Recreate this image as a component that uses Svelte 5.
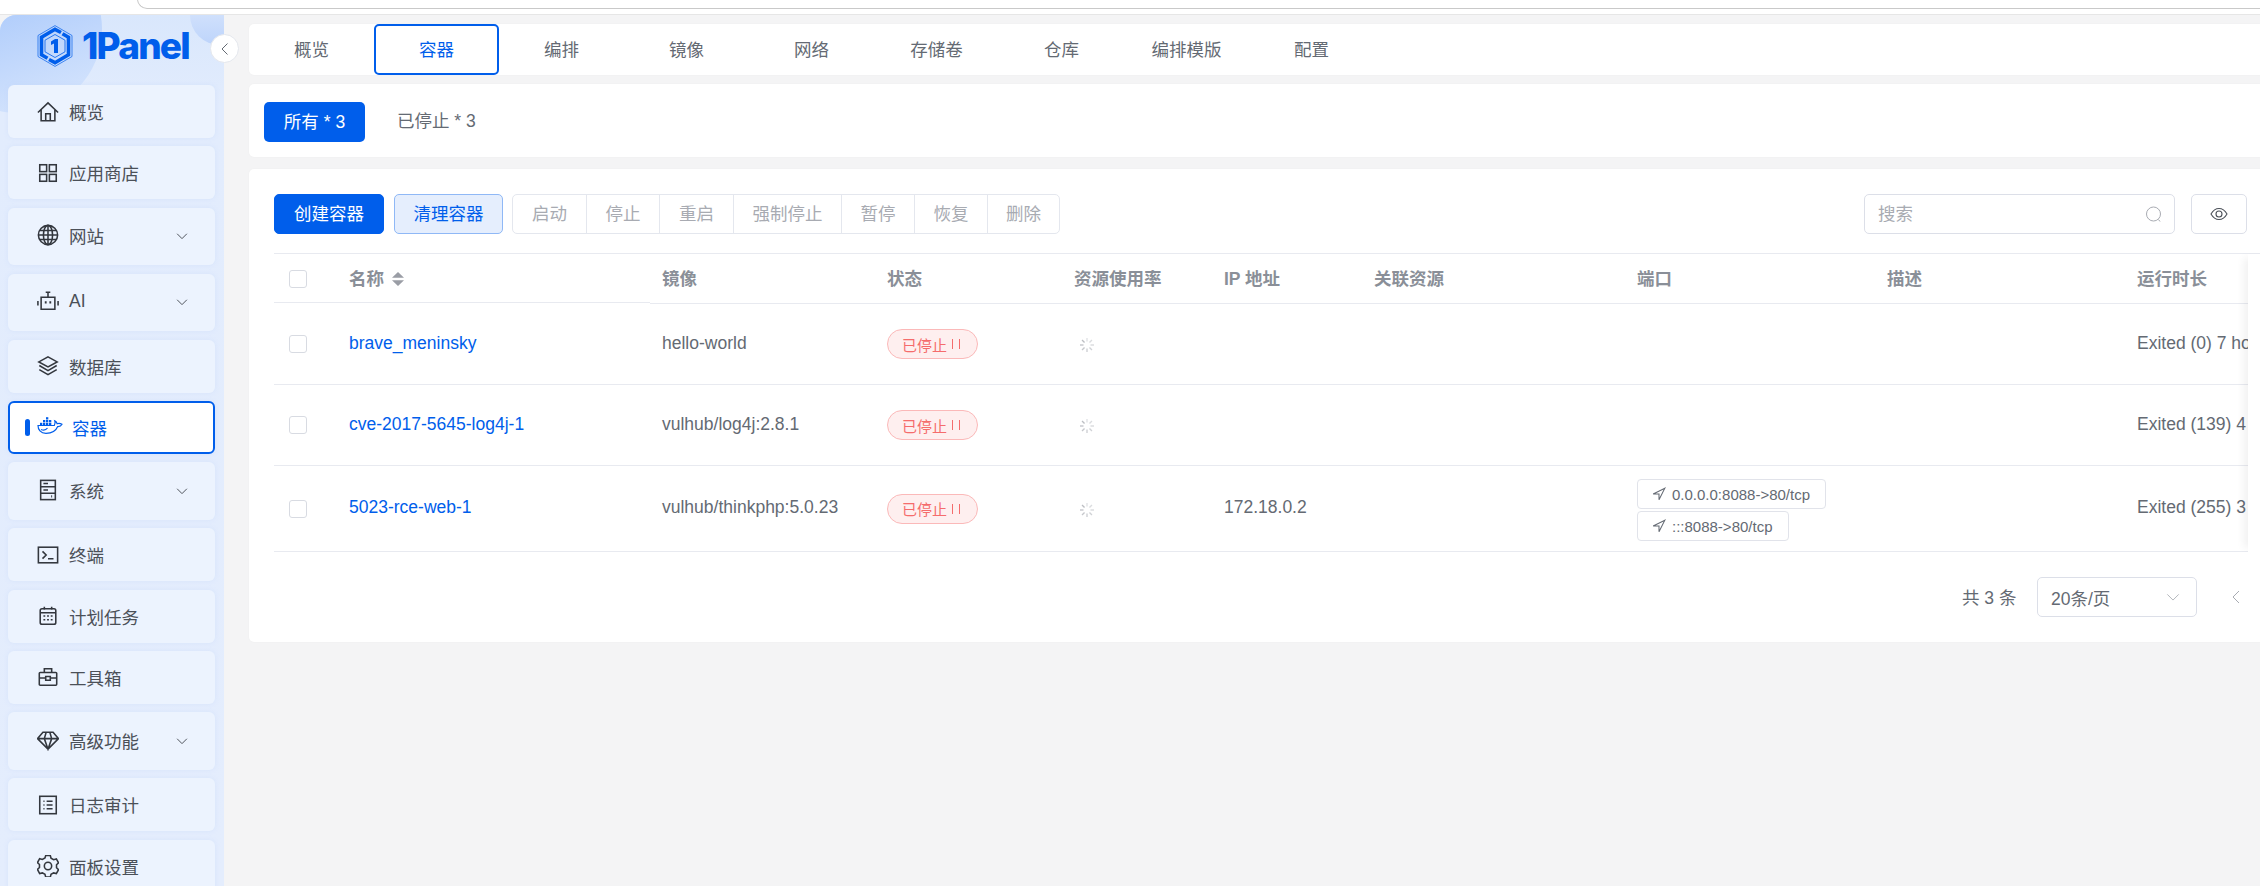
<script>
  const menu = [
    { t: '概览', i: 'home' },
    { t: '应用商店', i: 'apps' },
    { t: '网站', i: 'globe', sub: true },
    { t: 'AI', i: 'robot', sub: true },
    { t: '数据库', i: 'layers' },
    { t: '容器', i: 'docker', active: true },
    { t: '系统', i: 'server', sub: true },
    { t: '终端', i: 'term' },
    { t: '计划任务', i: 'cal' },
    { t: '工具箱', i: 'box' },
    { t: '高级功能', i: 'gem', sub: true },
    { t: '日志审计', i: 'log' },
    { t: '面板设置', i: 'gear' }
  ];
  const tabs = ['概览', '容器', '编排', '镜像', '网络', '存储卷', '仓库', '编排模版', '配置'];
  const ops = [
    { t: '启动', w: 73 },
    { t: '停止', w: 73 },
    { t: '重启', w: 74 },
    { t: '强制停止', w: 108 },
    { t: '暂停', w: 73 },
    { t: '恢复', w: 73 },
    { t: '删除', w: 72 }
  ];
  const heads = ['镜像', '状态', '资源使用率', 'IP 地址', '关联资源', '端口', '描述', '运行时长'];
  const rows = [
    { n: 'brave_meninsky', img: 'hello-world', ip: '', ports: [], up: 'Exited (0) 7 hours ago' },
    { n: 'cve-2017-5645-log4j-1', img: 'vulhub/log4j:2.8.1', ip: '', ports: [], up: 'Exited (139) 4 hours ago' },
    { n: '5023-rce-web-1', img: 'vulhub/thinkphp:5.0.23', ip: '172.18.0.2', ports: ['0.0.0.0:8088->80/tcp', ':::8088->80/tcp'], up: 'Exited (255) 3 hours ago' }
  ];
  const spokes = [0, 45, 90, 135, 180, 225, 270, 315];
</script>

{#snippet chevron(cls)}
  <svg class={cls} viewBox="0 0 16 16"><path d="M1.500 5 8 11.500 14.500 5" /></svg>
{/snippet}

{#snippet icon(n)}
  <svg class="mi" viewBox="0 0 24 24">
    {#if n === 'home'}
      <path d="M1 12.500 12 2l11 10.500M4.500 9.500v12h15v-12M9.500 21.500V14h5v7.500" />
    {:else if n === 'apps'}
      <rect x="3" y="3" width="7.500" height="7.500" /><rect x="13.500" y="3" width="7.500" height="7.500" /><rect x="3" y="13.500" width="7.500" height="7.500" /><rect x="13.500" y="13.500" width="7.500" height="7.500" />
    {:else if n === 'globe'}
      <circle cx="12" cy="12" r="10.500" /><ellipse cx="12" cy="12" rx="5" ry="10.500" /><path d="M12 1.500v21M1.500 12h21M3 7h18M3 17h18" />
    {:else if n === 'robot'}
      <path d="M4.500 8h15v13h-15zM12 8V3M9.500 2.500h5M1 12v5M23 12v5" /><path class="thick" d="M8.500 13.500h2M13.500 13.500h2" />
    {:else if n === 'layers'}
      <path d="M12 2 22 7.500 12 13 2 7.500zM2.500 11.500 12 17l9.500-5.500M2.500 16 12 21.500 21.500 16" />
    {:else if n === 'server'}
      <rect x="4" y="1.500" width="16" height="21" /><path d="M4 8.500h16M4 15.500h16M7 5h5M7 12h5" /><path class="thick" d="M15.500 19h1" />
    {:else if n === 'term'}
      <rect x="1.500" y="3.500" width="21" height="17" /><path d="m6 8 4 4-4 4M12 16h6" />
    {:else if n === 'cal'}
      <rect x="3.500" y="4" width="17" height="17" rx="2" /><path d="M3.500 8.500h17M8 2v3M16 2v3M7 12h2M11 12h2M15 12h2M7 16h2M11 16h2M15 16h2" />
    {:else if n === 'box'}
      <rect x="2.500" y="7" width="19" height="14" rx="1" /><path d="M8 7V3h8v4M2.500 13h7M14.500 13h7M9.500 11.500h5v4h-5z" />
    {:else if n === 'gem'}
      <path d="M6.500 3.500h11l6 7L12 22 .5 10.500zM.5 10.500h23M8 10.500 12 22l4-11.500M8 10.500l2-7M16 10.500l-2-7" />
    {:else if n === 'log'}
      <rect x="3" y="2.500" width="18" height="19" /><path d="M10.500 8H17M10.500 12H17M10.500 16H17M7 8h1.200M7 12h1.200M7 16h1.200" />
    {:else if n === 'gear'}
      <path d="m9.500 1.800 5 0 .8 3 2.800 1.600 3-.8 2.400 4.300-2.200 2.100 0 3.200 2.200 2.100-2.400 4.300-3-.8-2.800 1.600-.8 3h-5l-.8-3-2.800-1.600-3 .8L.5 17l2.200-2.100v-3.200L.5 9.600l2.400-4.300 3 .8 2.800-1.600z" transform="translate(0 -1.300)" /><circle cx="12" cy="12" r="4" />
    {/if}
  </svg>
{/snippet}

{#snippet docker()}
  <svg class="dk" viewBox="0 0 26 17">
    <path d="M1 8.500h16.300c.9-1.700 1-3.200.5-4.600 1.100.5 2 1.500 2.400 2.800 1.500-.6 3.200-.4 4.800.6-1 1.900-2.700 2.400-4.300 2.300C19 13.800 14.500 16.300 9 16.300 3.500 16.300 1 12.500 1 8.500Z" />
    <path d="M4 12.500c2.500 1 5 .5 6.500-1.500" />
    <g class="fill">
      <rect x="3" y="5.800" width="2.300" height="2.300" /><rect x="6" y="5.800" width="2.300" height="2.300" /><rect x="9" y="5.800" width="2.300" height="2.300" /><rect x="12" y="5.800" width="2.300" height="2.300" /><rect x="6" y="3" width="2.300" height="2.300" /><rect x="9" y="3" width="2.300" height="2.300" /><rect x="12" y="3" width="2.300" height="2.300" /><rect x="9" y=".2" width="2.300" height="2.300" />
    </g>
  </svg>
{/snippet}

<div class="chrome"><div class="url"></div></div>
<div class="page">
  <aside class="side">
    <div class="blob big"></div>
    <div class="blob small"></div>
    <div class="logo">
      <svg class="hex" viewBox="0 0 36 42">
        <path class="h1" d="M18 .6 35 10.500v21L18 41.400 1 31.500v-21z" />
        <path class="h2" d="M24 7.500 18 4.300 4.500 12.300v17.400l6 3.500M12 34.500l6 3.200 13.500-8V12.300l-6-3.500" />
        <path class="h4" d="M18 9.500 28 15.200v11.600L18 32.500 8 26.800V15.200z" />
        <path class="h3" d="M14 16.500 18 14h3v14h-4V18.500l-3 1.500z" />
      </svg>
      <span class="brand">1Panel</span>
    </div>
    <button class="collapse" aria-label="收起">
      <svg viewBox="0 0 12 12"><path d="M8.500 .5 3 6l5.500 5.500" /></svg>
    </button>
    <nav class="menu">
      {#each menu as m}
        <div class="item" class:tall={m.sub} class:on={m.active}>
          {#if m.active}
            <i class="bar"></i>
            {@render docker()}
          {:else}
            {@render icon(m.i)}
          {/if}
          <span>{m.t}</span>
          {#if m.sub}{@render chevron('chev')}{/if}
        </div>
      {/each}
    </nav>
  </aside>

  <main class="main">
    <div class="card tabs">
      {#each tabs as t, i}
        <div class="tab" class:cur={i === 1}>{t}</div>
      {/each}
    </div>

    <div class="card filter">
      <div class="all">所有 * 3</div>
      <div class="stop">已停止 * 3</div>
    </div>

    <section class="card box">
      <div class="tools">
        <button class="btn pri">创建容器</button>
        <button class="btn soft">清理容器</button>
        <div class="group">
          {#each ops as o}
            <div class="op" style="width:{o.w}px">{o.t}</div>
          {/each}
        </div>
        <div class="search">
          <span>搜索</span>
          <svg viewBox="0 0 16 16"><circle cx="7.500" cy="7.500" r="7" /><path d="m12.500 13 1.500 2" /></svg>
        </div>
        <div class="eye">
          <svg viewBox="0 0 18 14"><path d="M1 7c2-3.500 5-5.500 8-5.500S15 3.500 17 7c-2 3.500-5 5.500-8 5.500S3 10.500 1 7Z" /><circle cx="9" cy="7" r="3" /></svg>
        </div>
      </div>

      <div class="wrap">
        <table>
          <colgroup>
            <col style="width:63px" /><col style="width:313px" /><col style="width:225px" /><col style="width:187px" /><col style="width:150px" /><col style="width:150px" /><col style="width:263px" /><col style="width:250px" /><col style="width:250px" /><col style="width:300px" />
          </colgroup>
          <thead>
            <tr>
              <th class="lead"><i class="ck head"></i></th>
              <th class="lead">名称 <svg class="sort" viewBox="0 0 12 14"><path d="M6 0 12 5.800H0zM6 14 0 8.200h12z" /></svg></th>
              {#each heads as h}<th>{h}</th>{/each}
            </tr>
          </thead>
          <tbody>
            {#each rows as r}
              <tr>
                <td><i class="ck"></i></td>
                <td class="link t">{r.n}</td>
                <td class="t">{r.img}</td>
                <td><span class="tag">已停止 <svg viewBox="0 0 10 12"><path d="M1.500 1v10M8.500 1v10" /></svg></span></td>
                <td>
                  <svg class="spin" viewBox="0 0 18 18">
                    {#each spokes as a, k}
                      <line x1="9" y1="2" x2="9" y2="5.500" transform="rotate({a} 9 9)" style="opacity:{0.35 + k * 0.06}" />
                    {/each}
                  </svg>
                </td>
                <td class="t">{r.ip}</td>
                <td></td>
                <td class="ports">
                  {#each r.ports as p}
                    <div class="port">
                      <svg viewBox="0 0 12 12"><path d="M11 1 1 6h5v5z" /></svg>
                      {p}
                    </div>
                  {/each}
                </td>
                <td></td>
                <td class="t">{r.up}</td>
              </tr>
            {/each}
          </tbody>
        </table>
        <div class="fixed"></div>
      </div>

      <div class="pager">
        <span class="total">共 3 条</span>
        <div class="size">20条/页 {@render chevron('schev')}</div>
        <svg class="prev" viewBox="0 0 10 14"><path d="M8 1 2 7l6 6" /></svg>
      </div>
    </section>
  </main>
</div>

<style>
  :global(html), :global(body) {
    margin: 0;
    height: 886px;
    overflow: hidden;
    background: #f4f4f5;
  }
  * { box-sizing: border-box; }
  i { display: block; }
  button { font: inherit; }

  .chrome {
    height: 15px;
    background: #fff;
    border-bottom: 1px solid #e6e6e6;
    padding-left: 137px;
    overflow: hidden;
  }
  .url {
    height: 10px;
    margin-top: -1px;
    border: 1px solid #c9c9c9;
    border-top: none;
    border-right: none;
    border-radius: 0 0 0 12px;
  }
  .page {
    display: flex;
    height: 871px;
    font-family: "Liberation Sans", "Noto Sans CJK SC", sans-serif;
    font-size: 17.5px;
    color: #646a73;
  }

  .side {
    position: relative;
    flex: 0 0 224px;
    background: linear-gradient(180deg, #d9e7fc 0, #e2ecfd 90px, #e4edfd 100%);
    border-radius: 16px 0 0 0;
    overflow: hidden;
    padding-left: 8px;
  }
  .blob { position: absolute; border-radius: 50%; }
  .big {
    left: -66px; top: -70px; width: 168px; height: 168px;
    background: linear-gradient(160deg, #aac9fb 30%, #dbe8fd 100%);
  }
  .small {
    left: 190px; top: -30px; width: 60px; height: 60px;
    background: linear-gradient(180deg, #e2ecfd, #bdd4fb);
  }
  .logo {
    position: relative;
    height: 70px;
    display: flex;
    align-items: center;
    padding: 0 0 0 29px;
    gap: 9px;
  }
  .hex { width: 36px; height: 42px; margin-top: -9px; }
  .h1 { fill: none; stroke: #005eeb; stroke-width: .7; }
  .h2 { fill: none; stroke: #005eeb; stroke-width: 3.600; }
  .h3 { fill: #005eeb; }
  .h4 { fill: none; stroke: #005eeb; stroke-width: .8; }
  .brand {
    font-family: Inter, "Liberation Sans", sans-serif;
    font-weight: 800;
    font-size: 37px;
    letter-spacing: -1.800px;
    color: #005eeb;
    margin-top: -9px;
  }
  .collapse {
    position: fixed;
    z-index: 3;
    left: 210px;
    top: 34px;
    width: 29px;
    height: 29px;
    border-radius: 50%;
    background: #fff;
    border: 1px solid #e3e6ec;
    padding: 0;
    display: grid;
    place-items: center;
  }
  .collapse svg { width: 12px; height: 12px; }
  .collapse path { fill: none; stroke: #646a73; stroke-width: 1; }

  .menu { position: relative; display: flex; flex-direction: column; gap: 8.330px; width: 207px; }
  .item {
    height: 53px;
    flex: none;
    display: flex;
    align-items: center;
    padding-left: 29px;
    background: #ecf3fe;
    border-radius: 6px;
    box-shadow: 0 0 4px rgba(190, 210, 245, .35);
    color: #4b5058;
    position: relative;
  }
  .item.tall { height: 57.670px; padding-bottom: 2px; }
  .item span { margin-left: 10px; }
  .item.on {
    background: #fff;
    border: 2px solid #005eeb;
    color: #005eeb;
    padding-left: 27px;
  }
  .item.on span { margin-left: 9px; }
  .bar {
    position: absolute;
    left: 15px;
    top: 16px;
    width: 5px;
    height: 17px;
    border-radius: 3px;
    background: #005eeb;
  }
  .mi { width: 22px; height: 22px; flex: none; }
  .mi :global(*) { fill: none; stroke: #33373e; stroke-width: 1.700; }
  .mi :global(.thick) { stroke-width: 2.500; }
  .dk { width: 26px; height: 17px; flex: none; margin-top: -3px; }
  .dk path { fill: none; stroke: #005eeb; stroke-width: 1.200; }
  .dk .fill rect { fill: #005eeb; }
  .chev {
    position: absolute;
    left: 168px;
    top: 50%;
    width: 12px;
    height: 12px;
    margin-top: -6px;
  }
  .chev path, .schev path { fill: none; stroke: #4b5058; stroke-width: 1.300; }

  .main { flex: 1; min-width: 0; padding: 9px 0 0 25px; }
  .card { background: #fff; border-radius: 5px 0 0 5px; margin-right: -20px; box-shadow: 0 0 2px rgba(0, 0, 0, .04); }

  .tabs { height: 51px; display: flex; }
  .tab {
    width: 125px;
    display: grid;
    place-items: center;
    flex: none;
    padding-bottom: 2px;
  }
  .tab.cur {
    border: 2px solid #005eeb;
    border-radius: 5px;
    color: #005eeb;
  }
  .filter {
    margin-top: 9px;
    height: 73px;
    padding: 18px 0 0 15px;
    display: flex;
    align-items: flex-start;
  }
  .all {
    width: 101px;
    height: 40px;
    padding-bottom: 3px;
    background: #005eeb;
    color: #fff;
    border-radius: 5px;
    display: grid;
    place-items: center;
  }
  .stop { height: 40px; line-height: 38px; margin-left: 32px; }

  .box { margin-top: 12px; height: 473px; padding: 25px 0 0 25px; }
  .tools { display: flex; height: 40px; width: 1973px; position: relative; }
  .btn {
    height: 40px;
    border-radius: 5px;
    border: 1px solid #005eeb;
    padding: 0 0 3px;
  }
  .pri { width: 110px; background: #005eeb; color: #fff; }
  .soft { width: 109px; margin-left: 10px; background: #e5eefd; border-color: #8fb8f6; color: #005eeb; }
  .group {
    display: flex;
    margin-left: 9px;
    height: 40px;
    border: 1px solid #e4e7ee;
    border-radius: 5px;
    color: #a8abb2;
  }
  .op { display: grid; place-items: center; padding-bottom: 3px; border-left: 1px solid #e4e7ee; flex: none; }
  .op:first-child { border-left: none; }
  .search {
    margin-left: auto;
    width: 311px;
    height: 40px;
    border: 1px solid #dcdfe8;
    border-radius: 5px;
    display: flex;
    align-items: center;
    justify-content: space-between;
    padding: 0 12px 0 13px;
    color: #a8abb2;
  }
  .search span { margin-top: -3px; }
  .search svg { width: 16px; height: 17px; }
  .search svg * { fill: none; stroke: #a8abb2; stroke-width: 1; }
  .eye {
    margin-left: 16px;
    width: 56px;
    height: 40px;
    border: 1px solid #dcdfe8;
    border-radius: 5px;
    display: grid;
    place-items: center;
  }
  .eye svg { width: 18px; height: 14px; }
  .eye svg * { fill: none; stroke: #4b5058; stroke-width: 1.100; }

  .wrap { position: relative; margin-top: 19px; overflow: hidden; }
  table { table-layout: fixed; width: 2151px; border-collapse: separate; border-spacing: 0; }
  th {
    height: 51px;
    font-weight: 700;
    text-align: left;
    color: #8a8f98;
    padding: 0 12px 3px;
    border-top: 1px solid #e8eaf0;
    border-bottom: 1px solid #e8eaf0;
    white-space: nowrap;
  }
  th.lead { border-bottom-color: #fff; box-shadow: inset 0 -1px 0 #e8eaf0; }
  td {
    height: 81px;
    padding: 0 12px;
    border-bottom: 1px solid #e8eaf0;
    white-space: nowrap;
    overflow: hidden;
  }
  td.t { padding-bottom: 2px; }
  td.ports { padding-top: 3px; }
  tbody tr:last-child td { height: 86px; }
  .ck {
    width: 18px;
    height: 18px;
    border: 1px solid #d8dbe2;
    border-radius: 3px;
    margin-left: 3px;
    background: #fff;
  }
  .ck.head { margin-top: 3px; }
  .sort { width: 12px; height: 14px; margin-left: 3px; vertical-align: -1px; fill: #9a9da5; }
  .link { color: #005eeb; }
  .tag {
    display: inline-flex;
    align-items: center;
    vertical-align: middle;
    width: 91px;
    height: 30px;
    padding: 0 14px;
    font-size: 15px;
    color: #f56c6c;
    background: #feefef;
    border: 1px solid #fbb9b9;
    border-radius: 15px;
    gap: 4px;
  }
  .tag svg { width: 10px; height: 12px; flex: none; }
  .tag path { fill: none; stroke: #f56c6c; stroke-width: 1; }
  .spin { width: 18px; height: 18px; display: block; margin: 2px 0 0 4px; }
  .spin line { stroke: #a8abb2; stroke-width: 1.300; }
  .port {
    display: flex;
    align-items: center;
    gap: 6px;
    width: max-content;
    height: 30px;
    padding: 0 15px 0 14px;
    font-size: 15px;
    border: 1px solid #e1e3ea;
    border-radius: 4px;
    background: #fff;
  }
  .port + .port { margin-top: 2px; }
  .port svg { width: 14px; height: 14px; }
  .port path { fill: none; stroke: #646a73; stroke-width: .9; }
  .fixed {
    position: absolute;
    left: 1974px;
    top: 1px;
    bottom: 0;
    width: 30px;
    background: #fff;
    box-shadow: -8px 0 8px -4px rgba(0, 0, 0, .06);
  }

  .pager {
    display: flex;
    align-items: center;
    height: 40px;
    margin-top: 25px;
    padding-left: 1688px;
  }
  .total { width: 75px; flex: none; padding-bottom: 2px; }
  .size {
    width: 160px;
    height: 40px;
    border: 1px solid #dcdfe8;
    border-radius: 5px;
    display: flex;
    align-items: center;
    justify-content: space-between;
    padding: 0 16px 0 13px;
    flex: none;
  }
  .schev { width: 14px; height: 14px; }
  .schev path { stroke: #a8abb2; stroke-width: 1; }
  .prev { width: 10px; height: 14px; margin-left: 34px; flex: none; }
  .prev path { fill: none; stroke: #a8abb2; stroke-width: 1; }
</style>
